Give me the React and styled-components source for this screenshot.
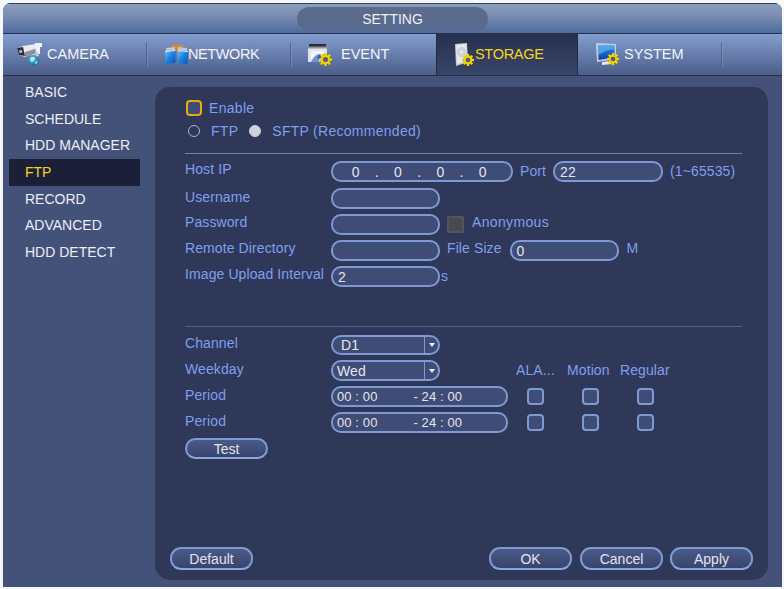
import React from 'react';
import styled, { createGlobalStyle } from 'styled-components';

const Global = createGlobalStyle`
  html, body { margin: 0; padding: 0; background: #f6f7fa; }
  body { width: 784px; height: 589px; overflow: hidden; font-family: "Liberation Sans", Arial, sans-serif; }
`;

const Page = styled.div`
  width: 784px;
  height: 589px;
  padding: 3px 2px 2px 3px;
  box-sizing: border-box;
`;
const Window = styled.div`
  width: 779px;
  height: 584px;
  display: flex;
  flex-direction: column;
  background: #44527a;
  border-radius: 8px 8px 0 0;
  overflow: hidden;
`;
const TitleBar = styled.div`
  height: 29px;
  flex: none;
  display: flex;
  justify-content: center;
  align-items: center;
  background: linear-gradient(#8d9dbd, #7d90b5 35%, #4f6a9c);
  border-top: 1px solid #33415f;
  border-bottom: 1px solid #25324f;
`;
const TitlePill = styled.div`
  width: 191px;
  height: 24px;
  border-radius: 12px;
  background: linear-gradient(#5c6c8b, #57698f);
  color: #eef0f5;
  font-size: 14px;
  line-height: 24px;
  text-align: center;
`;
const TabBar = styled.div`
  height: 41px;
  flex: none;
  display: grid;
  grid-template-columns: 144px 144px 145px 142px 144px 1fr;
  background: linear-gradient(#839dd0, #6d84b4 40%, #4c5e88);
  border-bottom: 1px solid #25324f;
`;
const Tab = styled.div`
  display: flex;
  align-items: center;
  padding-left: ${p => p.$pad}px;
  color: ${p => (p.$active ? '#f7d51d' : '#f2f4f8')};
  background: ${p => (p.$active ? 'linear-gradient(#262f4f, #3a4669)' : 'transparent')};
  box-shadow: ${p => (p.$active ? 'inset 1px 0 #1f2a45, inset -1px 0 #1f2a45' : 'none')};
  font-size: 14.5px;
  letter-spacing: ${p => p.$track || 0}px;
  white-space: nowrap;
`;
const TabIcon = styled.svg`
  flex: none;
  display: block;
`;
const TabText = styled.span`
  margin-left: ${p => p.$gap}px;
  padding-bottom: 1px;
`;
const TabDivider = styled.i`
  margin-left: auto;
  width: 1px;
  height: 24px;
  flex: none;
  background: #4d6290;
  box-shadow: 1px 0 rgba(150, 170, 210, 0.35);
`;
const Body = styled.div`
  flex: 1;
  display: flex;
  min-height: 0;
`;
const Sidebar = styled.nav`
  width: 152px;
  flex: none;
  padding: 3px 0 0 6px;
  box-sizing: border-box;
`;
const MenuItem = styled.div`
  width: 131px;
  height: 26.67px;
  line-height: 26px;
  padding-left: 16px;
  box-sizing: border-box;
  font-size: 14px;
  color: ${p => (p.$active ? '#f7d51d' : '#eceef4')};
  background: ${p => (p.$active ? '#1b2038' : 'transparent')};
`;
const Panel = styled.section`
  width: 613px;
  height: 493px;
  margin-top: 11px;
  flex: none;
  display: flex;
  flex-direction: column;
  background: #303859;
  border-radius: 15px;
  padding: 13px 15px 10px 15px;
  box-sizing: border-box;
  color: #7f9fee;
  font-size: 14px;
  letter-spacing: 0.1px;
`;
const Inner = styled.div`
  padding: 0 11px 0 15px;
`;
const EnableRow = styled.div`
  display: flex;
  align-items: center;
  height: 16px;
  letter-spacing: 0.3px;
`;
const EnableBox = styled.span`
  width: 16px;
  height: 16px;
  box-sizing: border-box;
  border: 2px solid #e8a912;
  border-radius: 4px;
  margin-left: 1px;
  margin-right: 7px;
  background: #3f4c75;
`;
const RadioRow = styled.div`
  display: flex;
  align-items: center;
  height: 18px;
  margin-top: 6px;
  letter-spacing: 0.28px;
`;
const Radio = styled.span`
  width: 12px;
  height: 12px;
  box-sizing: border-box;
  border-radius: 50%;
  margin-left: ${p => p.$left}px;
  margin-right: ${p => p.$right}px;
  border: 1.5px solid ${p => (p.$on ? '#cfd2d8' : '#a9b3cc')};
  background: ${p => (p.$on ? '#cfd2d8' : 'transparent')};
`;
const Rule = styled.hr`
  border: 0;
  height: 1px;
  margin: ${p => p.$top}px 0 ${p => p.$bottom}px;
  background: ${p => p.$color};
`;
const FormRow = styled.div`
  display: flex;
  align-items: center;
  height: ${p => p.$h || 21}px;
  margin-bottom: ${p => p.$after ?? 5}px;
  white-space: nowrap;
`;
const Label = styled.span`
  width: 146px;
  flex: none;
  padding-bottom: ${p => p.$up ?? 4}px;
`;
const Field = styled.span`
  width: ${p => p.$w}px;
  height: 100%;
  flex: none;
  box-sizing: border-box;
  border: 2px solid #7f9ad2;
  border-radius: 10px;
  margin-left: ${p => p.$left || 0}px;
  background: #3f4c76;
  color: #e4e6ee;
  display: flex;
  align-items: center;
  padding-left: ${p => p.$pad ?? 5}px;
  font-size: ${p => p.$size || 14}px;
  overflow: hidden;
`;
const IpCell = styled.span`
  width: 21.2px;
  text-align: center;
  flex: none;
`;
const SelectValue = styled.span`
  flex: 1;
`;
const SelectArrow = styled.span`
  width: 13px;
  height: 100%;
  flex: none;
  border-left: 1px solid #7f9ad2;
  display: flex;
  align-items: center;
  justify-content: center;
  &::before {
    content: '';
    border-style: solid;
    border-width: 4px 3px 0;
    border-color: #eef0f6 transparent transparent;
  }
`;
const PeriodEnd = styled.span`
  margin-left: 36px;
`;
const Inline = styled.span`
  margin-left: ${p => p.$left}px;
  padding-bottom: ${p => p.$up ?? 1}px;
  letter-spacing: ${p => p.$track ?? 0.1}px;
  flex: none;
`;
const HeaderCell = styled.span`
  width: ${p => p.$w}px;
  flex: none;
  padding-bottom: 1px;
`;
const HeaderGroup = styled.span`
  display: flex;
  margin-left: 76px;
`;
const Square = styled.span`
  width: 17px;
  height: 17px;
  flex: none;
  box-sizing: border-box;
  border: 2px solid ${p => (p.$off ? '#56565a' : '#7f9ad2')};
  border-radius: ${p => (p.$off ? 2 : 4)}px;
  background: ${p => (p.$off ? '#4a4a4e' : '#3f4c76')};
  margin-left: ${p => p.$left}px;
`;
const Button = styled.button`
  width: 83px;
  height: ${p => p.$h || 23}px;
  box-sizing: border-box;
  border: 2px solid #7f9ad2;
  border-bottom-color: #8ba6dc;
  border-radius: 11px;
  background: linear-gradient(#4a5a87, #38446c);
  color: #e2e4ec;
  font: 14px "Liberation Sans", Arial, sans-serif;
  padding: 0;
  display: block;
`;
const ApplyButton = styled(Button)`
  margin-left: -1px;
`;
const Footer = styled.footer`
  margin-top: auto;
  display: flex;
  gap: 8px;
`;
const Spacer = styled.span`
  flex: 1;
`;

const Gear = ({ cx, cy, r = 5.5 }) => (
  <g>
    <circle cx={cx} cy={cy} r={r - 1} fill="#f5d000" stroke="#7a6400" strokeWidth="0.6" />
    {[0, 45, 90, 135].map(a => (
      <rect key={a} x={cx - 1.1} y={cy - r - 0.6} width="2.2" height={2 * r + 1.2} fill="#f7d400" transform={`rotate(${a} ${cx} ${cy})`} />
    ))}
    <circle cx={cx} cy={cy} r={r * 0.42} fill="#4c5e88" />
  </g>
);

const CameraIcon = () => (
  <TabIcon width="25" height="23" viewBox="0 0 25 23">
    <defs>
      <radialGradient id="globe" cx="0.4" cy="0.35" r="0.7">
        <stop offset="0" stopColor="#5fd0f0" />
        <stop offset="1" stopColor="#0d5f96" />
      </radialGradient>
    </defs>
    <path d="M0 5 L6 3 L18 1 L21 3 L21 10 L8 14 L2 12 Z" fill="#e8eaef" />
    <path d="M0 5 L6 4 L8 13 L2 12 Z" fill="#2a2e38" />
    <path d="M8 9 L21 5 L21 10 L8 14 Z" fill="#8a90a0" />
    <circle cx="3.7" cy="8.5" r="1.7" fill="#a6acb8" />
    <path d="M18 0 H25 V4 H23 V11 H19 Z" fill="#f2f3f6" />
    <path d="M14 12 L21 9 L22 13 L17 15 Z" fill="#c4c8d2" />
    <circle cx="16.5" cy="17.5" r="5.4" fill="url(#globe)" />
    <path d="M13 15 Q16 13 18 15 L17 18 L14 19 Z M18 19 L21 18 L19 22 Z" fill="#c7eef2" opacity="0.85" />
  </TabIcon>
);
const NetworkIcon = () => (
  <TabIcon width="23" height="19" viewBox="0 0 23 19">
    <defs>
      <linearGradient id="net" x1="0" y1="0" x2="1" y2="1">
        <stop offset="0" stopColor="#74c8f6" />
        <stop offset="0.5" stopColor="#1a82e0" />
        <stop offset="1" stopColor="#0a55b8" />
      </linearGradient>
    </defs>
    <path d="M1 3 L10 2 V5 L1 6 Z M13 2 L22 3 V6 L13 5 Z" fill="#c4c7cf" />
    <path d="M0 6 L10.5 5 V18 L0.5 19 Z" fill="url(#net)" />
    <path d="M12.5 5 L23 6 L22.5 19 L12.5 18 Z" fill="url(#net)" />
    <path d="M0 6 L10.5 5 V6 L0 7 Z M12.5 5 L23 6 V7 L12.5 6 Z" fill="#e6edf6" />
    <path d="M6 0 H18 V2 H13 V6 H10.5 V2 H6 Z" fill="#e08a20" />
  </TabIcon>
);
const EventIcon = () => (
  <TabIcon width="24" height="22" viewBox="0 0 24 22">
    <rect x="1" y="0" width="17" height="5" fill="#2b2d33" />
    <rect x="0" y="4" width="19" height="14" fill="#dfe3ea" />
    <rect x="0" y="2.5" width="19" height="2" fill="#8d919b" />
    <rect x="3" y="7" width="12" height="9" fill="#f2f4f8" />
    <path d="M3 18 Q8 8 13 11 L11 18 Z" fill="#6f94d6" />
    <path d="M9 13 l3 -3 2 2 -3 4 z" fill="#2e62b8" />
    <Gear cx={17.5} cy={15.5} r={6} />
  </TabIcon>
);
const StorageIcon = () => (
  <TabIcon width="21" height="23" viewBox="0 0 21 23">
    <path d="M2 1 L14 0 L15 19 L3 23 Z" fill="#c4c9d2" />
    <path d="M3 2 L13 1 L14 18 L4 21 Z" fill="#e6e9ee" />
    <ellipse cx="8.5" cy="9" rx="4" ry="4.5" fill="#d2d6de" stroke="#b4b9c4" strokeWidth="0.6" />
    <circle cx="8.5" cy="9" r="1.1" fill="#f5f6f8" />
    <Gear cx={15} cy={17} r={5.5} />
  </TabIcon>
);
const SystemIcon = () => (
  <TabIcon width="23" height="23" viewBox="0 0 23 23">
    <defs>
      <linearGradient id="scr" x1="0" y1="0" x2="0" y2="1">
        <stop offset="0" stopColor="#2a90e4" />
        <stop offset="1" stopColor="#0a3fa8" />
      </linearGradient>
    </defs>
    <path d="M0 0 L20 1 L20 16 L1 19 Z" fill="#c9cdd6" />
    <path d="M2 2 L18.5 2.5 L18.5 14.5 L2.5 17 Z" fill="url(#scr)" />
    <path d="M2 2 L18.5 2.5 L18.5 6 Q10 7 2.3 12 Z" fill="#5fb0ec" opacity="0.75" />
    <path d="M6 19 L14 18 L16 21 L6 22 Z" fill="#e5e7ec" />
    <Gear cx={17} cy={16} r={5.5} />
  </TabIcon>
);

const menu = ['BASIC', 'SCHEDULE', 'HDD MANAGER', 'FTP', 'RECORD', 'ADVANCED', 'HDD DETECT'];
const tabs = [
  { name: 'CAMERA', Icon: CameraIcon, pad: 14, gap: 5 },
  { name: 'NETWORK', Icon: NetworkIcon, pad: 18, gap: 0, track: -0.4 },
  { name: 'EVENT', Icon: EventIcon, pad: 17, gap: 9 },
  { name: 'STORAGE', Icon: StorageIcon, pad: 17, gap: 1, active: true, track: -0.3 },
  { name: 'SYSTEM', Icon: SystemIcon, pad: 18, gap: 5 },
];

const PeriodRow = ({ after }) => (
  <FormRow $after={after}>
    <Label>Period</Label>
    <Field $w={177} $size={13} $pad={4}>00 : 00<PeriodEnd>- 24 : 00</PeriodEnd></Field>
    <Square $left={19} />
    <Square $left={38} />
    <Square $left={38} />
  </FormRow>
);

export default function App() {
  return (
    <Page>
      <Global />
      <Window>
        <TitleBar><TitlePill>SETTING</TitlePill></TitleBar>
        <TabBar>
          {tabs.map(({ name, Icon, pad, gap, active, track }) => (
            <Tab key={name} $pad={pad} $active={active} $track={track}>
              <Icon />
              <TabText $gap={gap}>{name}</TabText>
              {!active && name !== 'EVENT' && <TabDivider />}
            </Tab>
          ))}
        </TabBar>
        <Body>
          <Sidebar>
            {menu.map(m => <MenuItem key={m} $active={m === 'FTP'}>{m}</MenuItem>)}
          </Sidebar>
          <Panel>
            <Inner>
              <EnableRow><EnableBox />Enable</EnableRow>
              <RadioRow>
                <Radio $left={3} $right={11} />FTP
                <Radio $left={11} $right={11} $on />SFTP (Recommended)
              </RadioRow>
              <Rule $top={13} $bottom={7} $color="#6480b4" />
              <FormRow $after={6}>
                <Label $up={6}>Host IP</Label>
                <Field $w={182} $pad={12}>
                  <IpCell>0</IpCell><IpCell>.</IpCell><IpCell>0</IpCell><IpCell>.</IpCell>
                  <IpCell>0</IpCell><IpCell>.</IpCell><IpCell>0</IpCell>
                </Field>
                <Inline $left={7}>Port</Inline>
                <Field $w={110} $left={7}>22</Field>
                <Inline $left={7}>(1~65535)</Inline>
              </FormRow>
              <FormRow><Label>Username</Label><Field $w={109} /></FormRow>
              <FormRow>
                <Label $up={6}>Password</Label><Field $w={109} />
                <Square $off $left={7} />
                <Inline $left={8} $up={5} $track={0.35}>Anonymous</Inline>
              </FormRow>
              <FormRow>
                <Label $up={6}>Remote Directory</Label><Field $w={109} />
                <Inline $left={7} $up={5}>File Size</Inline>
                <Field $w={109} $left={8}>0</Field>
                <Inline $left={8} $up={5}>M</Inline>
              </FormRow>
              <FormRow $after={0}>
                <Label $up={6}>Image Upload Interval</Label><Field $w={109}>2</Field>
                <Inline $left={1}>s</Inline>
              </FormRow>
              <Rule $top={39} $bottom={8} $color="#4c628f" />
              <FormRow $h={20}>
                <Label>Channel</Label>
                <Field $w={109} $pad={8}><SelectValue>D1</SelectValue><SelectArrow /></Field>
              </FormRow>
              <FormRow>
                <Label>Weekday</Label>
                <Field $w={109} $pad={4}><SelectValue>Wed</SelectValue><SelectArrow /></Field>
                <HeaderGroup>
                  <HeaderCell $w={51}>ALA...</HeaderCell>
                  <HeaderCell $w={53}>Motion</HeaderCell>
                  <HeaderCell $w={50}>Regular</HeaderCell>
                </HeaderGroup>
              </FormRow>
              <PeriodRow />
              <PeriodRow />
              <Button $h={21}>Test</Button>
            </Inner>
            <Footer>
              <Button>Default</Button>
              <Spacer />
              <Button>OK</Button>
              <Button>Cancel</Button>
              <ApplyButton>Apply</ApplyButton>
            </Footer>
          </Panel>
        </Body>
      </Window>
    </Page>
  );
}
